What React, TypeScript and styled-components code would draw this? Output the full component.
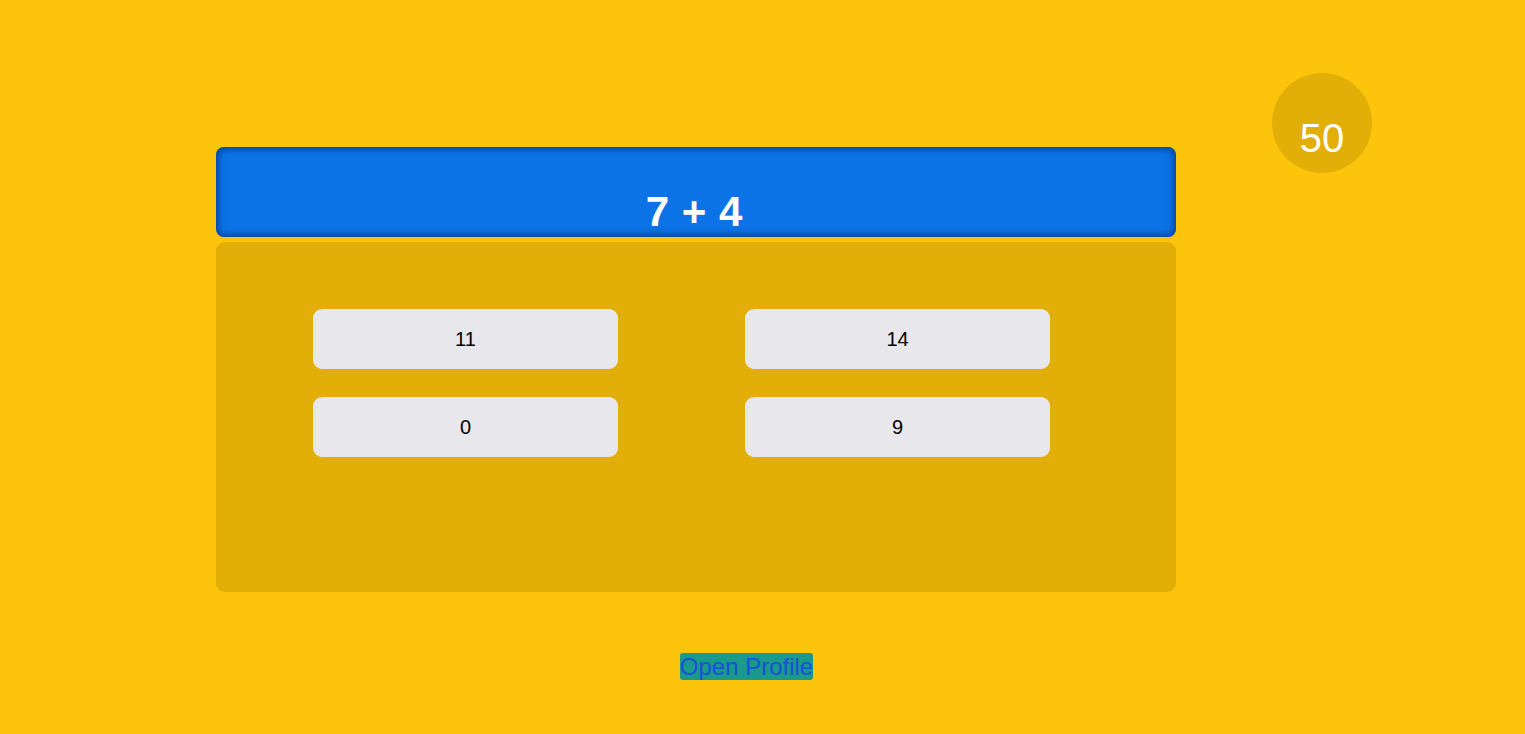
import React from "react";
import styled, { createGlobalStyle } from "styled-components";

const Global = createGlobalStyle`
  html, body { margin: 0; padding: 0; background: #fdc40c; }
  body { font-family: "Liberation Sans", Arial, sans-serif; }
`;

const Page = styled.div`
  width: 1525px;
  height: 734px;
  background: #fdc40c;
  display: flex;
  flex-direction: column;
  align-items: flex-start;
`;

const TopRow = styled.div`
  display: flex;
  align-items: flex-start;
  padding-left: 216px;
`;

const Game = styled.div`
  width: 960px;
  display: flex;
  flex-direction: column;
  gap: 5px;
  padding-top: 147px;
`;

const Question = styled.div`
  height: 90px;
  box-sizing: border-box;
  background: #0b73e6;
  border-radius: 8px;
  box-shadow: inset 0 0 7px 2px rgba(0, 40, 110, 0.7);
  display: flex;
  justify-content: center;
  align-items: flex-end;
  padding-bottom: 1px;
`;

const QuestionText = styled.h1`
  margin: 0 4px 0 0;
  color: #ffffff;
  font-size: 42px;
  font-weight: bold;
  line-height: 48px;
  word-spacing: 1px;
`;

const Panel = styled.div`
  height: 350px;
  box-sizing: border-box;
  background: #e1af07;
  border-radius: 9px;
  padding: 67px 0 0 97px;
  display: grid;
  grid-template-columns: 432px 432px;
  grid-auto-rows: 60px;
  row-gap: 28px;
  align-content: start;
`;

const Answer = styled.button`
  width: 305px;
  height: 60px;
  border: none;
  border-radius: 9px;
  background: #e8e8ec;
  color: #000;
  font-family: "Liberation Sans", Arial, sans-serif;
  font-size: 20px;
  padding: 0;
  cursor: pointer;
`;

const Score = styled.div`
  margin-left: 96px;
  margin-top: 73px;
  width: 100px;
  height: 100px;
  border-radius: 50%;
  background: #e1af07;
  color: #ffffff;
  font-size: 40px;
  display: flex;
  justify-content: center;
  align-items: flex-end;
  padding-bottom: 12px;
  box-sizing: border-box;
  line-height: 46px;
`;

const Footer = styled.div`
  width: 1493px;
  display: flex;
  justify-content: center;
  padding-top: 61px;
`;

const ProfileButton = styled.button`
  border: none;
  background: #1a9a8c;
  color: #1a4fd6;
  font-family: "Liberation Sans", Arial, sans-serif;
  font-size: 24px;
  line-height: 27px;
  padding: 0;
  border-radius: 3px;
  cursor: pointer;
`;

export default function App() {
  const answers = ["11", "14", "0", "9"];
  return (
    <>
      <Global />
      <Page>
        <TopRow>
          <Game>
            <Question>
              <QuestionText>7 + 4</QuestionText>
            </Question>
            <Panel>
              {answers.map((a) => (
                <Answer key={a}>{a}</Answer>
              ))}
            </Panel>
          </Game>
          <Score>50</Score>
        </TopRow>
        <Footer>
          <ProfileButton>Open Profile</ProfileButton>
        </Footer>
      </Page>
    </>
  );
}
